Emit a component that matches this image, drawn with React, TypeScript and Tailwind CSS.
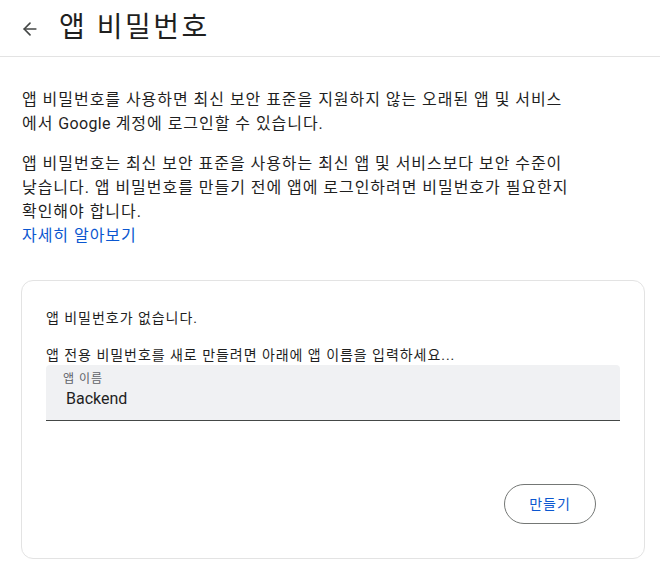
import { ArrowLeft } from "lucide-react"

export default function App() {
  return (
    <div className="w-[660px] h-[570px] bg-white overflow-hidden text-[#1f1f1f] tracking-[0.06em] font-['Roboto','Noto_Sans_CJK_KR',sans-serif]">
      {/* header */}
      <div className="h-[57px] flex items-center border-b border-[#e3e3e3]">
        <ArrowLeft size={20} strokeWidth={2} className="ml-[20px] mt-[2px] text-[#444746]" />
        <h1 className="ml-[19px] text-[28px] leading-none font-normal tracking-[0.09em] text-[#1f1f1f]">앱 비밀번호</h1>
      </div>

      <div className="px-[22px] pt-[31px] text-[16px] leading-[24px] text-[#1f1f1f]">
        <p>
          앱 비밀번호를 사용하면 최신 보안 표준을 지원하지 않는 오래된 앱 및 서비스
          <br />
          에서 <span className="tracking-[0.02em]">Google</span> 계정에 로그인할 수 있습니다.
        </p>
        <p className="mt-[16px]">
          앱 비밀번호는 최신 보안 표준을 사용하는 최신 앱 및 서비스보다 보안 수준이
          <br />
          낮습니다. 앱 비밀번호를 만들기 전에 앱에 로그인하려면 비밀번호가 필요한지
          <br />
          확인해야 합니다.
        </p>
        <a className="block text-[#0b57d0]">자세히 알아보기</a>
      </div>

      <div className="mx-[21px] mt-[32px] w-[624px] h-[279px] border border-[#e3e3e3] rounded-[12px] px-[24px] pt-[27px]">
        <p className="text-[14px] leading-[20px]">앱 비밀번호가 없습니다.</p>
        <p className="mt-[17px] text-[14px] leading-[20px]">앱 전용 비밀번호를 새로 만들려면 아래에 앱 이름을 입력하세요...</p>
        <div className="w-[574px] h-[56px] bg-[#f0f1f3] rounded-t-[4px] border-b border-[#444746] pl-[17px] pt-[6px]">
          <div className="text-[12px] leading-[16px] text-[#5f6368]">앱 이름</div>
          <div className="ml-[3px] text-[16px] leading-[24px] tracking-normal text-[#1f1f1f]">Backend</div>
        </div>
        <div className="flex justify-end mt-[63px] pr-[24px]">
          <button className="w-[92px] h-[40px] rounded-full border border-[#747775] text-[14px] text-[#0b57d0]">
            만들기
          </button>
        </div>
      </div>
    </div>
  )
}
